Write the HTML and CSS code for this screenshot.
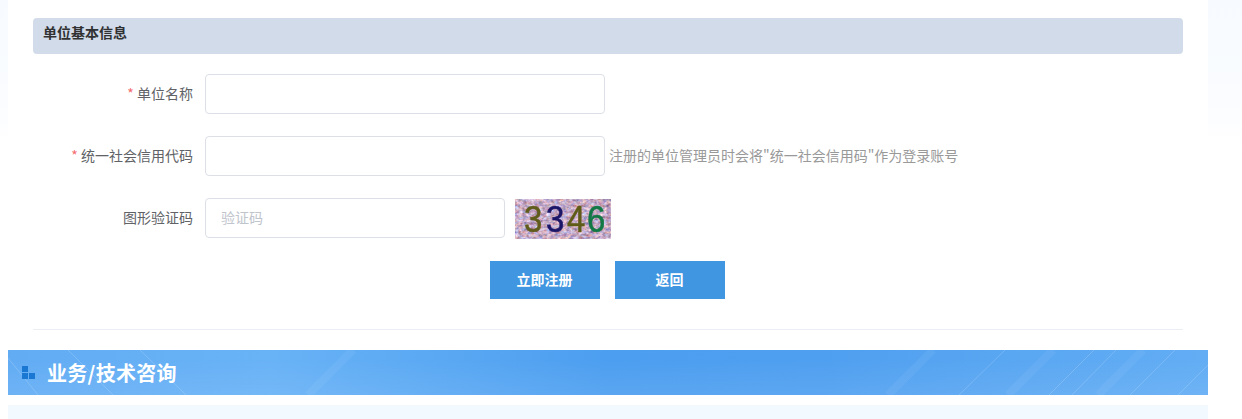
FILE: index.html
```html
<!DOCTYPE html>
<html lang="zh-CN">
<head>
<meta charset="utf-8">
<title>单位注册</title>
<link rel="stylesheet" href="styles.css">
</head>
<body>
<main class="page">
  <div class="panel">
    <h2 class="section-title">单位基本信息</h2>
    <form class="form">
      <div class="row">
        <label class="label"><span class="req">*</span> 单位名称</label>
        <input class="input" type="text">
      </div>
      <div class="row">
        <label class="label"><span class="req">*</span> 统一社会信用代码</label>
        <input class="input" type="text">
        <span class="hint">注册的单位管理员时会将"统一社会信用码"作为登录账号</span>
      </div>
      <div class="row">
        <label class="label">图形验证码</label>
        <input class="input input-short" type="text" placeholder="验证码">
        <svg class="captcha" width="96" height="40" viewBox="0 0 96 40" role="img" aria-label="验证码图片">
          <defs>
            <filter id="noise" x="0" y="0" width="100%" height="100%" color-interpolation-filters="sRGB">
              <feTurbulence type="fractalNoise" baseFrequency="0.25 0.34" numOctaves="3" seed="11"/>
              <feColorMatrix type="matrix" values="0.5 0.45 0 0 0.3  0.2 0.6 0.2 0 0.17  0 0.45 0.5 0 0.3  0 0 0 0 1"/>
              <feGaussianBlur stdDeviation="0.7"/>
            </filter>
            <filter id="soft" color-interpolation-filters="sRGB"><feGaussianBlur stdDeviation="0.7"/></filter>
          </defs>
          <rect width="96" height="40" filter="url(#noise)"/>
          <g class="captcha-text" filter="url(#soft)" transform="translate(0 33) scale(1 1.1)">
            <text x="9" fill="#5f5c1c" stroke="#5f5c1c">3</text>
            <text x="31" fill="#1c1668" stroke="#1c1668">3</text>
            <text x="52" fill="#5f5c18" stroke="#5f5c18">4</text>
            <text x="72" fill="#127845" stroke="#127845">6</text>
          </g>
        </svg>
      </div>
      <div class="actions">
        <button class="btn" type="button">立即注册</button>
        <button class="btn" type="button">返回</button>
      </div>
    </form>
    <hr class="divider">
  </div>
  <div class="banner">
    <svg class="banner-streaks" width="1200" height="45" viewBox="0 0 1200 45" aria-hidden="true">
      <defs><filter id="streak-blur"><feGaussianBlur stdDeviation="0.5"/></filter></defs>
      <g class="streak-group" filter="url(#streak-blur)">
        <path class="streak" d="M132 0L178 45M0 8L30 45M60 0L105 45"/>
        <path class="streak" d="M1041 45L1086 0M1064 45L1108 0M1122 45L1167 0M1170 45L1200 15M951 45L997 0"/>
        <path class="streak streak-wide" d="M880 45L925 0M1000 45L1045 0M1090 45L1135 0M300 45L345 0"/>
      </g>
    </svg>
    <svg class="banner-icon" width="13" height="13" viewBox="0 0 13 13" aria-hidden="true">
      <rect x="0" y="0" width="6" height="6" fill="#1a78d2"/>
      <rect x="0" y="7" width="6" height="6" fill="#1a78d2"/>
      <rect x="7" y="7" width="6" height="6" fill="#1a78d2"/>
    </svg>
    <span class="banner-title">业务/技术咨询</span>
  </div>
  <div class="next-panel"></div>
</main>
</body>
</html>
```

FILE: styles.css
```css
* { box-sizing: border-box; }
html, body { margin: 0; padding: 0; height: 419px; overflow: hidden; }
body {
  background: linear-gradient(#f7fbff 0, #fafcff 100px, #ffffff 145px) no-repeat;
  font-family: "Noto Sans CJK SC", "Liberation Sans", sans-serif;
  font-size: 14px;
  color: #606266;
}
.page { width: 1200px; margin-left: 8px; background: #fff; height: 419px; }
.panel { padding: 18px 25px 0; }
.section-title {
  margin: 0;
  height: 36px;
  padding: 4px 10px 0;
  background: #d2dbe9;
  border-radius: 4px;
  color: #303133;
  font-size: 14px;
  line-height: 20px;
  font-weight: 700;
}
.form { padding-top: 20px; }
.row { display: flex; align-items: center; height: 40px; margin-bottom: 22px; }
.label { width: 160px; margin: 0 12px 2px 0; text-align: right; line-height: 38px; color: #606266; }
.req { color: #f56c6c; }
.input {
  width: 400px;
  height: 40px;
  padding: 0 15px 2px;
  border: 1px solid #dcdfe6;
  border-radius: 4px;
  background: #fff;
  font: inherit;
  color: #606266;
  outline: 0;
}
.input-short { width: 300px; }
.input::placeholder { color: #c0c4cc; opacity: 1; }
.hint { margin: 0 0 3px 4px; color: #999; white-space: nowrap; line-height: 20px; }
.captcha { display: block; margin: 2px 0 0 10px; flex: none; }
.captcha-text { font-family: "Liberation Sans", sans-serif; font-size: 33px; stroke-width: 0.5px; }
.actions { display: flex; justify-content: center; gap: 15px; padding: 1px 2px 0 0; }
.btn {
  width: 110px;
  height: 38px;
  border: 0;
  padding: 0 0 2px;
  background: #4096e0;
  color: #fff;
  font: inherit;
  font-weight: 700;
}
.divider { margin: 30px 0 0; border: 0; border-top: 1px solid #ebeef5; }
.banner {
  position: relative;
  display: flex;
  align-items: center;
  height: 45px;
  margin-top: 20px;
  padding-left: 14px;
  background:
    linear-gradient(rgba(255,255,255,0) 20%, rgba(255,255,255,.08) 100%),
    linear-gradient(90deg, #62acf4 0, #68b2f6 22%, #4c9ef0 50%, #4f9ff0 68%, #5aa7f2 85%, #62adf4 100%);
}
.banner-streaks { position: absolute; left: 0; top: 0; }
.streak-group { fill: none; }
.streak { stroke: rgba(255,255,255,.16); stroke-width: 1px; }
.streak-wide { stroke: rgba(255,255,255,.05); stroke-width: 8px; }
.banner-icon { position: relative; display: block; flex: none; margin-right: 12px; }
.banner-title { position: relative; color: #fff; font-size: 20px; font-weight: 700; line-height: 45px; letter-spacing: .3px; }
.next-panel { height: 14px; margin-top: 10px; background: #f2faff; }
```
